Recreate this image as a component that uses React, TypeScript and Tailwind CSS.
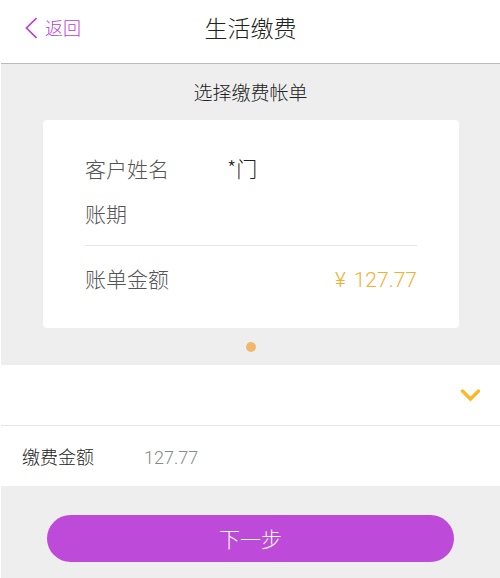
import { useState } from 'react';

interface Bill {
  customer: string;
  period: string;
  amount: string;
}

const bill: Bill = { customer: '*门', period: '', amount: '127.77' };

function BillCard({ customer, period, amount }: Bill) {
  return (
    <section className="mx-[41px] mt-3 ml-[42px] rounded-sm bg-white px-[42px] pt-[27px] pb-7 text-[21px] text-[#555]">
      <dl>
        <div className="flex h-11 items-center">
          <dt className="w-[142px]">客户姓名</dt>
          <dd className="text-[#222]">{customer}</dd>
        </div>
        <div className="flex h-[55px] items-center border-b border-[#e5e5e5] pb-2">
          <dt className="w-[142px]">账期</dt>
          <dd className="text-[#222]">{period}</dd>
        </div>
        <div className="flex h-[54px] items-baseline justify-between pt-[17px]">
          <dt>账单金额</dt>
          <dd className="flex gap-2 font-['Roboto','Noto_Sans_CJK_SC',sans-serif] text-[#f0b030]">
            <span>¥</span>
            <span>{amount}</span>
          </dd>
        </div>
      </dl>
    </section>
  );
}

export default function App() {
  const [open, setOpen] = useState(false);
  const [amount, setAmount] = useState(bill.amount);

  return (
    <div className="min-h-screen border-l border-white bg-[#eee] font-['Noto_Sans_CJK_SC','Noto_Sans',sans-serif] font-light text-[#222]">
      {/* Header */}
      <header className="grid h-16 grid-cols-3 items-center border-b border-[#bbb] bg-white px-6 pb-2">
        <a href="#back" className="flex items-center gap-2 text-[18px] text-[#b840d8]">
          <svg className="h-6 w-3" viewBox="0 0 12 24" fill="none" stroke="currentColor" strokeWidth="1.7">
            <path d="M11.5 2 1.5 12l10 10" />
          </svg>
          返回
        </a>
        <h1 className="text-center text-[23px]">生活缴费</h1>
      </header>

      {/* Bill selection */}
      <main>
        <h2 className="pt-3.5 pb-0.5 text-center text-[19px] leading-7">选择缴费帐单</h2>
        <BillCard {...bill} />
        <div className="flex h-[37px] items-center justify-center">
          <span className="h-2.5 w-2.5 rounded-full bg-[#f3b76b]" />
        </div>

        <div className="flex h-[61px] items-center justify-end border-b border-[#e5e5e5] bg-white px-5">
          <button type="button" aria-label="展开" aria-expanded={open} onClick={() => setOpen(!open)}>
            <svg className="h-5 w-5" viewBox="0 0 20 20" fill="none" stroke="#f9b928" strokeWidth="3.5" strokeLinecap="round">
              <path d="m2.5 6 8 8 8-8" />
            </svg>
          </button>
        </div>

        <div className="flex h-[60px] items-center bg-white px-[21px]">
          <label htmlFor="amount" className="w-[122px] text-[18px]">缴费金额</label>
          <input
            id="amount"
            className="min-w-0 flex-1 bg-transparent pt-0.5 font-['Roboto','Noto_Sans_CJK_SC',sans-serif] text-[18px] text-[#888] outline-none"
            value={amount}
            onChange={(e) => setAmount(e.target.value)}
          />
        </div>

        <div className="px-[46px] pt-[29px]">
          <button type="button" className="h-[47px] w-full rounded-full bg-[#bd4ad8] text-[21px] text-white">
            下一步
          </button>
        </div>
      </main>
    </div>
  );
}
